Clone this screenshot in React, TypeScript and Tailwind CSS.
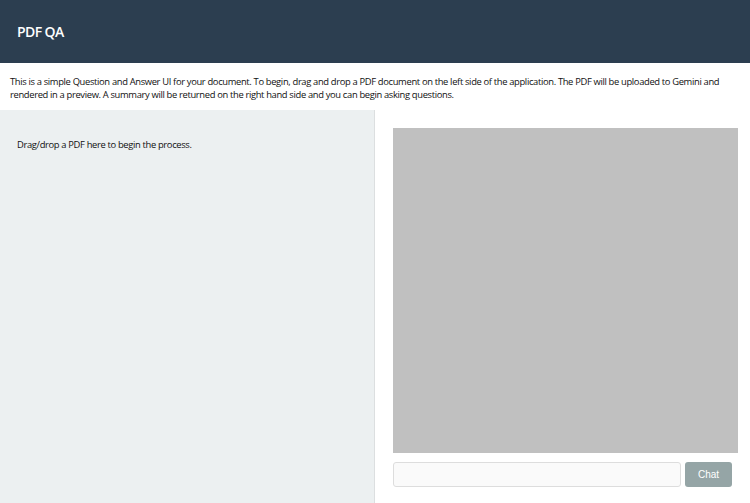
export default function App() {
  const font = { fontFamily: '"Open Sans", "Noto Sans", sans-serif' };
  return (
    <div className="w-[750px] h-[503px] flex flex-col bg-white overflow-hidden" style={font}>
      <header className="h-[63px] shrink-0 bg-[#2c3e50] flex items-center px-[17px]">
        <h1 className="text-white font-semibold text-[14px] tracking-[-0.6px]">PDF QA</h1>
      </header>
      <p className="px-[10px] pt-[12px] h-[47px] shrink-0 text-[9.4px] leading-[13px] text-[#111] tracking-[-0.34px]">
        This is a simple Question and Answer UI for your document. To begin, drag and drop a PDF document on the left side of the application. The PDF will be uploaded to Gemini and rendered in a preview. A summary will be returned on the right hand side and you can begin asking questions.
      </p>
      <div className="flex flex-1 min-h-0">
        <div className="w-[375px] shrink-0 bg-[#ecf0f1] border-r border-[#dcdfe0] px-[17px] pt-[28px]">
          <p className="text-[9.4px] leading-[13px] text-[#111] tracking-[-0.34px]">Drag/drop a PDF here to begin the process.</p>
        </div>
        <div className="flex-1 flex flex-col pl-[18px] pr-[12px] pt-[18px] pb-[16px]">
          <div className="h-[325px] shrink-0 bg-[#c0c0c0]"></div>
          <div className="flex mt-[9px] gap-[4px] pr-[6px]">
            <input className="w-[288px] h-[25px] bg-[#fafafa] border border-[#dddddd] rounded-[3px] outline-none" />
            <button className="w-[47px] h-[25px] bg-[#95a5a6] text-white rounded-[3px] text-[10px]" style={{ fontFamily: '"Liberation Sans", Arial, sans-serif' }}>Chat</button>
          </div>
        </div>
      </div>
    </div>
  );
}
